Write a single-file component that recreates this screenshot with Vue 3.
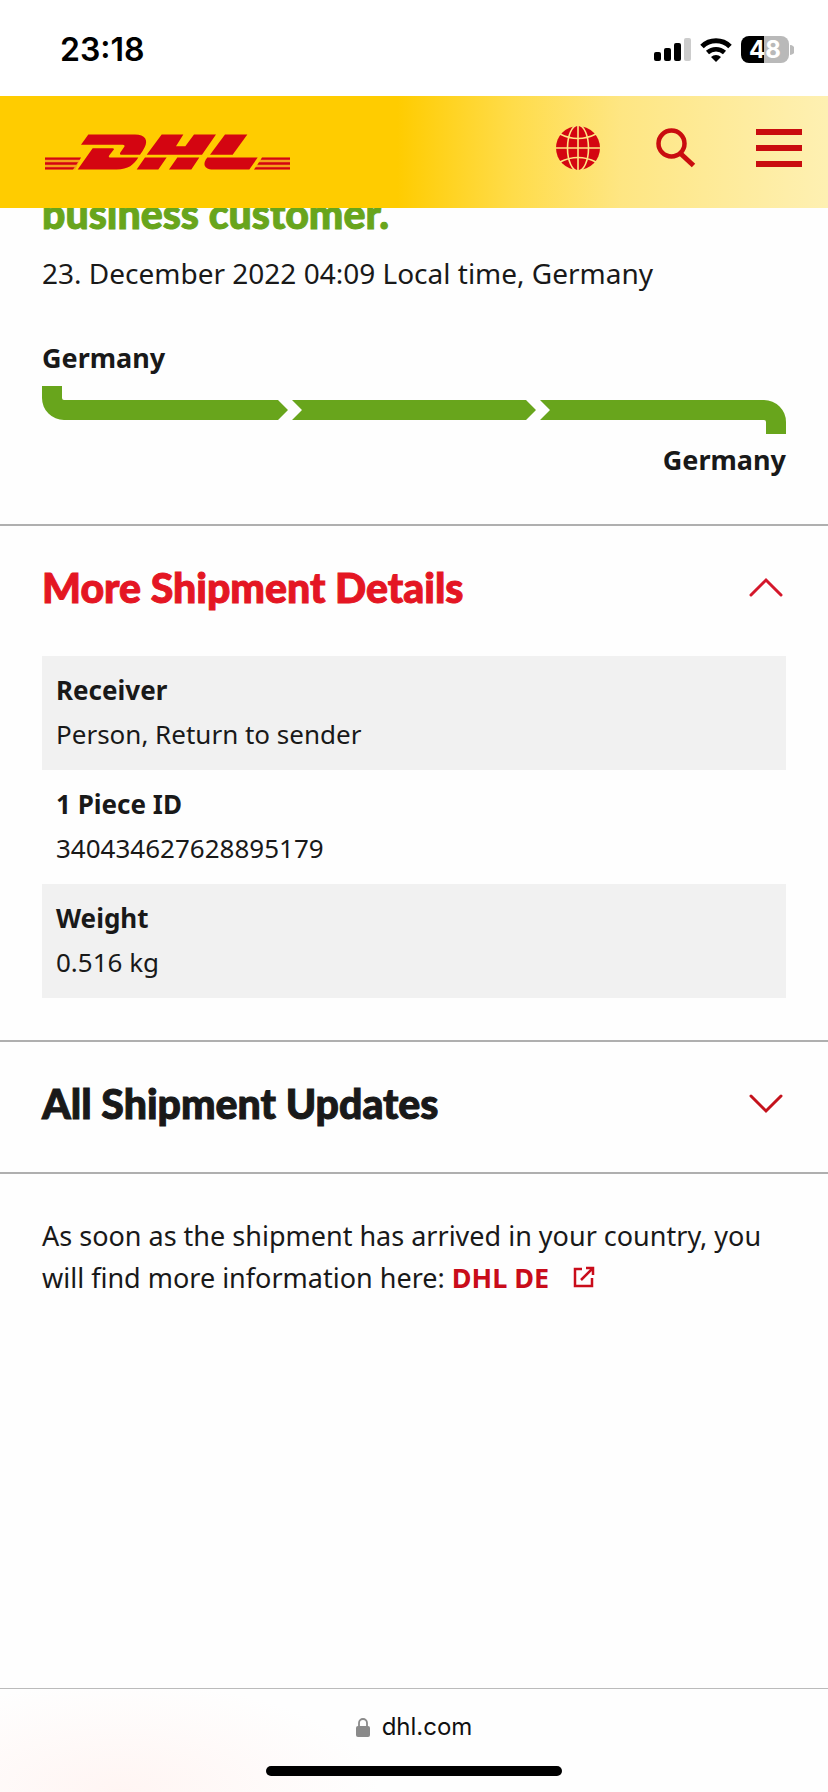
<script setup>
import { ref } from 'vue'

const detailsOpen = ref(true)
const updatesOpen = ref(false)

const details = [
  { label: 'Receiver', value: 'Person, Return to sender' },
  { label: '1 Piece ID', value: '340434627628895179' },
  { label: 'Weight', value: '0.516 kg' },
]
</script>

<template>
  <div class="screen">
    <div class="status">
      <span class="clock">23:18</span>
      <div class="indicators">
        <svg width="37" height="25" viewBox="0 0 37 25" aria-hidden="true">
          <rect x="0" y="15" width="7" height="9" rx="2" />
          <rect x="10" y="11" width="7" height="13" rx="2" />
          <rect x="20" y="6" width="7" height="18" rx="2" />
          <rect x="30" y="1" width="7" height="23" rx="2" fill="#ccc" />
        </svg>
        <svg width="32" height="24" viewBox="0 0 32 24" fill="none" stroke="#000" stroke-width="5" aria-hidden="true">
          <path d="M2 8.500A20 20 0 0 1 30 8.500" />
          <path d="M7.500 14.500A12.500 12.500 0 0 1 24.500 14.500" stroke-width="4.500" />
          <path d="M16 24l-5-5a7.500 7.500 0 0 1 10 0z" fill="#000" stroke="none" />
        </svg>
        <div class="battery">
          <span class="charge">48</span>
          <svg width="4" height="10" viewBox="0 0 4 10" aria-hidden="true"><path d="M0 0a5 5 0 0 1 0 10z" fill="#bbb" /></svg>
        </div>
      </div>
    </div>

    <header class="brand-bar">
      <a href="#" class="logo" aria-label="DHL">
        <svg width="245" height="36" viewBox="135 404 735 107" fill="#d40511" aria-hidden="true">
          <path d="M265 405H405C436 405 445 423 434 443C430 451 425 459 420 466H366Q357 466 361 459L373 442Q376 437 368 436H243Z" />
          <path d="M278 446H338Q344 446 341 451L328 467Q323 474 333 474H415C402 495 385 510 350 510H233Z" />
          <path d="M485 405H550L528 440H556L582 405H648L606 466H440Z" />
          <path d="M435 474H500L475 510H410ZM532 474H598L574 510H507Z" />
          <path d="M675 405H742L698 466H630Z" />
          <path d="M622 474H773L748 510H640C614 510 605 495 622 474Z" />
          <path d="M135 474H243L226 510H135ZM786 474H870V510H762Z" fill="#f5a01c" />
          <path d="M135 474H243L239 481H135ZM135 488H234L229 496H135ZM135 503H224L219 510H135Z" />
          <path d="M786 474H870V481H782ZM777 488H870V496H772ZM767 503H870V510H762Z" />
        </svg>
      </a>
      <nav class="actions">
        <button type="button" aria-label="Change language">
          <svg width="44" height="44" viewBox="0 0 44 44" aria-hidden="true">
            <circle cx="22" cy="22" r="22" fill="#d40511" />
            <g fill="none" stroke="#fee684" stroke-width="1.600">
              <path d="M22 0v44M0 22h44" />
              <ellipse cx="22" cy="22" rx="10.500" ry="23" />
              <path d="M4 8Q22 17 40 8M4 36Q22 27 40 36" />
            </g>
          </svg>
        </button>
        <button type="button" aria-label="Search">
          <svg width="40" height="40" viewBox="0 0 40 40" fill="none" stroke="#c90c0f" aria-hidden="true">
            <circle cx="15.500" cy="15.500" r="13" stroke-width="4.500" />
            <path d="M24.500 25.500L37.500 37.500" stroke-width="5" />
          </svg>
        </button>
        <button type="button" aria-label="Menu">
          <svg width="46" height="38" viewBox="0 0 46 38" fill="#c90c0f" aria-hidden="true">
            <path d="M0 0h46v6H0zM0 16h46v6H0zM0 32h46v6H0z" />
          </svg>
        </button>
      </nav>
    </header>

    <main>
      <section class="progress">
        <h2 class="title state">business customer.</h2>
        <p class="when">23. December 2022 04:09 Local time, Germany</p>
        <p class="place from">Germany</p>
        <svg class="track" viewBox="0 0 744 48" fill="#68a51c" aria-hidden="true">
          <path d="M0 0H20V12Q20 14 22 14H236L246 24L236 34H22A22 22 0 0 1 0 12Z" />
          <path d="M250 14H484L494 24L484 34H250L260 24Z" />
          <path d="M498 14H722A22 22 0 0 1 744 36V48H724V36Q724 34 722 34H498L508 24Z" />
        </svg>
        <p class="place to">Germany</p>
      </section>

      <section class="panel">
        <h2 class="title">
          <button type="button" class="toggle open" :aria-expanded="detailsOpen" @click="detailsOpen = !detailsOpen">
            More Shipment Details
            <svg width="36" height="22" viewBox="0 0 36 22" fill="none" stroke="#d4172b" stroke-width="3" stroke-linecap="round" aria-hidden="true">
              <path :d="detailsOpen ? 'M3 18L18 3L33 18' : 'M3 3L18 18L33 3'" />
            </svg>
          </button>
        </h2>
        <dl v-if="detailsOpen" class="details">
          <div v-for="item in details" :key="item.label" class="row">
            <dt>{{ item.label }}</dt>
            <dd>{{ item.value }}</dd>
          </div>
        </dl>
      </section>

      <section class="panel">
        <h2 class="title">
          <button type="button" class="toggle" :aria-expanded="updatesOpen" @click="updatesOpen = !updatesOpen">
            All Shipment Updates
            <svg width="36" height="22" viewBox="0 0 36 22" fill="none" stroke="#c4121c" stroke-width="3" stroke-linecap="round" aria-hidden="true">
              <path :d="updatesOpen ? 'M3 18L18 3L33 18' : 'M3 3L18 18L33 3'" />
            </svg>
          </button>
        </h2>
      </section>

      <p class="note">
        As soon as the shipment has arrived in your country, you will find more information here:
        <a href="#">DHL DE<svg width="22" height="22" viewBox="0 0 22 22" fill="none" stroke="#c90c1a" stroke-width="2.500" aria-hidden="true">
          <path d="M9 3H2V20H19V12" />
          <path d="M13 2H20V9M20 2L8 14" />
        </svg></a>
      </p>
    </main>

    <footer class="browser-bar">
      <div class="address">
        <svg width="14" height="19" viewBox="0 0 14 19" aria-hidden="true">
          <rect x="0" y="8" width="14" height="11" rx="2" fill="#8a8a8a" />
          <path d="M3 9V5a4 4 0 0 1 8 0V9" fill="none" stroke="#8a8a8a" stroke-width="1.800" />
        </svg>
        <span>dhl.com</span>
      </div>
      <div class="home"></div>
    </footer>
  </div>
</template>

<style>
body {
  margin: 0;
  background: #fff;
}
</style>

<style scoped>
.screen {
  display: flex;
  flex-direction: column;
  min-height: 100vh;
  overflow: hidden;
  color: #191919;
  background: #fefefe;
  font-family: "Noto Sans", "Open Sans", sans-serif;
  font-size: 27px;
  line-height: 42px;
}
h2, p, dl, dt, dd {
  margin: 0;
}
button {
  padding: 0;
  border: 0;
  background: none;
  color: inherit;
  font: inherit;
  cursor: pointer;
}
svg {
  display: block;
}
.status {
  display: flex;
  align-items: center;
  justify-content: space-between;
  height: 96px;
  padding: 0 34px 0 60px;
  box-sizing: border-box;
  background: #fff;
  color: #000;
  font-family: Inter, sans-serif;
}
.clock {
  padding-top: 4px;
  font-size: 32px;
  font-weight: 600;
}
.indicators {
  display: flex;
  align-items: center;
  gap: 9px;
  padding-top: 3px;
}
.battery {
  display: flex;
  align-items: center;
  gap: 1px;
}
.charge {
  width: 48px;
  height: 27px;
  border-radius: 8px;
  background: linear-gradient(90deg, #000 48%, #b9b9b9 48%);
  color: #fff;
  font-size: 24px;
  font-weight: 700;
  line-height: 27px;
  text-align: center;
}
.brand-bar {
  position: relative;
  z-index: 1;
  display: flex;
  align-items: center;
  justify-content: space-between;
  height: 112px;
  padding: 0 26px 0 45px;
  box-sizing: border-box;
  background: linear-gradient(90deg, #ffcc00 48%, #ffdc4a 62%, #fee683 75%, #fef0b2 100%);
}
.actions {
  display: flex;
  align-items: center;
  padding-bottom: 8px;
}
.actions button + button {
  margin-left: 56px;
}
.actions button + button + button {
  margin-left: 60px;
}
.title {
  font-family: Lato, "Noto Sans", sans-serif;
  font-size: 41px;
  font-weight: 900;
  line-height: 48px;
  -webkit-text-stroke: 1px currentColor;
}
.progress {
  padding: 0 42px 43px;
}
.state {
  margin-top: -18px;
  color: #68a51c;
}
.when {
  margin-top: 14px;
  font-size: 28px;
}
.place {
  font-weight: 700;
}
.from {
  margin-top: 43px;
}
.track {
  width: 100%;
  margin: 7px 0 5px;
}
.to {
  text-align: right;
}
.panel {
  padding: 38px 42px 42px;
  border-top: 2px solid #afafaf;
}
.panel .title {
  padding-bottom: 2px;
}
.toggle {
  display: flex;
  align-items: center;
  justify-content: space-between;
  width: 100%;
  padding-right: 2px;
}
.open {
  color: #e41623;
}
.details {
  margin-top: 42px;
}
.row {
  padding: 12px 14px 14px;
  font-size: 26px;
  line-height: 44px;
}
.row:nth-child(odd) {
  background: #f1f1f1;
}
dt {
  font-weight: 700;
}
.note {
  padding: 41px 42px;
  border-top: 2px solid #afafaf;
}
.note a {
  color: #c90c1a;
  font-weight: 700;
  text-decoration: none;
}
.note svg {
  display: inline-block;
  margin-left: 24px;
}
.browser-bar {
  display: flex;
  flex-direction: column;
  align-items: center;
  justify-content: space-between;
  height: 104px;
  margin-top: auto;
  padding: 21px 0 16px;
  box-sizing: border-box;
  border-top: 1px solid #bbb;
  background: radial-gradient(ellipse 260px 110px at 120px 100%, #fff5f3, #fefefe);
}
.address {
  display: flex;
  align-items: center;
  gap: 12px;
  color: #111;
  font-family: Inter, sans-serif;
  font-size: 24px;
  line-height: 34px;
}
.home {
  width: 296px;
  height: 10px;
  border-radius: 5px;
  background: #000;
}
</style>
